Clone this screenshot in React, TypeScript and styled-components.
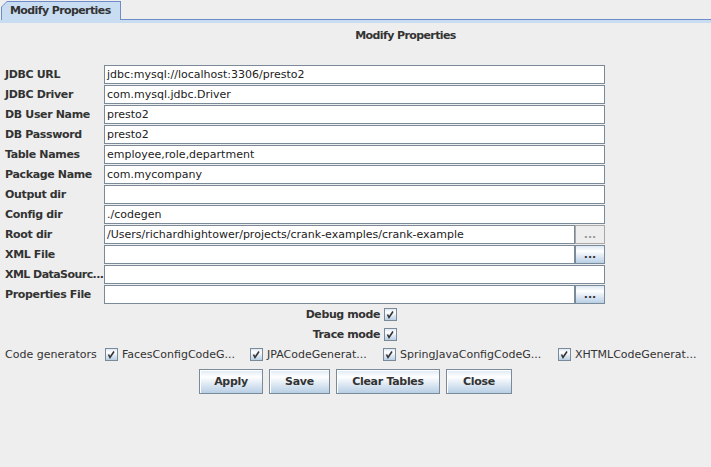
import React from 'react';
import styled, { createGlobalStyle } from 'styled-components';

const GlobalStyle = createGlobalStyle`
  html, body {
    margin: 0;
    padding: 0;
    background: #eeeeee;
  }
  body {
    font-family: "DejaVu Sans", Verdana, sans-serif;
    font-size: 11px;
    color: #333333;
  }
`;

const Window = styled.div`
  width: 711px;
  height: 467px;
  overflow: hidden;
  background: #eeeeee;
`;

const TabStrip = styled.div`
  display: flex;
  flex-direction: column;
`;

const TabRow = styled.div`
  display: flex;
  height: 20px;
  padding-top: 1px;
  box-sizing: border-box;
`;

const TabOuter = styled.div`
  margin-left: 1px;
  width: 120px;
  height: 19px;
  box-sizing: border-box;
  padding: 1px 1px 0 1px;
  background: #6f8cc8;
  clip-path: polygon(6px 0, 100% 0, 100% 100%, 0 100%, 0 6px);
`;

const TabInner = styled.div`
  height: 100%;
  background: #c8ddf2;
  clip-path: polygon(5px 0, 100% 0, 100% 100%, 0 100%, 0 5px);
  padding-left: 8px;
  line-height: 17px;
  font-weight: bold;
  letter-spacing: -0.6px;
  white-space: nowrap;
`;

const TabFiller = styled.div`
  flex: 1;
  border-bottom: 1px solid #6f8cc8;
`;

const ContentEdge = styled.div`
  height: 3px;
  background: #c8ddf2;
`;

const Title = styled.div`
  margin-top: 6px;
  padding-left: 100px;
  text-align: center;
  line-height: 14px;
  font-weight: bold;
  letter-spacing: -0.6px;
`;

const Form = styled.div`
  margin-top: 22px;
  padding-left: 5px;
  display: grid;
  grid-template-columns: 99px 501px;
  grid-auto-rows: 19px;
  row-gap: 1px;
`;

const Label = styled.div<{ $squeeze?: boolean }>`
  align-self: center;
  font-weight: bold;
  letter-spacing: ${(p) => (p.$squeeze ? '-0.55px' : '-0.35px')};
  white-space: nowrap;
  line-height: 14px;
`;

const FieldCell = styled.div`
  display: flex;
`;

const TextField = styled.div`
  flex: 1;
  height: 19px;
  box-sizing: border-box;
  border: 1px solid #7a8a99;
  background: #ffffff;
  padding-left: 2px;
  line-height: 17px;
  color: #222222;
  white-space: nowrap;
  overflow: hidden;
`;

const BrowseButton = styled.div<{ $disabled?: boolean }>`
  width: 30px;
  height: 19px;
  box-sizing: border-box;
  border: 1px solid ${(p) => (p.$disabled ? '#a8a8a8' : '#7a8a99')};
  background: ${(p) =>
    p.$disabled
      ? '#eeeeee'
      : 'linear-gradient(#dde8f3 0%, #ffffff 30%, #dde8f3 62%, #b8cfe5 100%)'};
  color: ${(p) => (p.$disabled ? '#999999' : '#333333')};
  font-weight: bold;
  text-align: center;
  line-height: 18px;
`;

const ToggleRow = styled.div`
  display: grid;
  grid-template-columns: 380px 13px;
  column-gap: 4px;
  height: 20px;
  align-items: center;
`;

const ToggleLabel = styled.div`
  justify-self: end;
  font-weight: bold;
  letter-spacing: -0.4px;
`;

const GeneratorRow = styled.div`
  display: flex;
  align-items: center;
  height: 20px;
  padding-left: 5px;
`;

const GeneratorLabel = styled.div`
  width: 100px;
  white-space: nowrap;
`;

const GeneratorItem = styled.div<{ $width: number }>`
  width: ${(p) => p.$width}px;
  display: flex;
  align-items: center;
  gap: 4px;
  white-space: nowrap;
`;

const Box = styled.span`
  display: inline-block;
  flex: none;
  width: 13px;
  height: 13px;
  box-sizing: border-box;
  border: 1px solid #7a8a99;
  background: linear-gradient(#dde8f3 0%, #ffffff 30%, #dde8f3 62%, #b8cfe5 100%);
  svg {
    display: block;
  }
`;

const ButtonRow = styled.div`
  margin-top: 5px;
  display: flex;
  justify-content: center;
  gap: 6px;
`;

const Button = styled.div<{ $width: number }>`
  width: ${(p) => p.$width}px;
  height: 25px;
  box-sizing: border-box;
  border: 1px solid #7a8a99;
  box-shadow: inset 1px 1px 0 #ffffff;
  background: linear-gradient(#dde8f3 0%, #ffffff 30%, #dde8f3 62%, #b8cfe5 100%);
  font-weight: bold;
  text-align: center;
  line-height: 23px;
  letter-spacing: -0.3px;
`;

function CheckBox() {
  return (
    <Box>
      <svg width="11" height="11" viewBox="0 0 11 11">
        <polyline
          points="2.5,5.5 4,8.5 8,2.5"
          fill="none"
          stroke="#333333"
          strokeWidth="1.6"
        />
      </svg>
    </Box>
  );
}

type Row = { label: string; value: string; browse?: 'on' | 'off'; squeeze?: boolean };

const rows: Row[] = [
  { label: 'JDBC URL', value: 'jdbc:mysql://localhost:3306/presto2' },
  { label: 'JDBC Driver', value: 'com.mysql.jdbc.Driver' },
  { label: 'DB User Name', value: 'presto2' },
  { label: 'DB Password', value: 'presto2' },
  { label: 'Table Names', value: 'employee,role,department' },
  { label: 'Package Name', value: 'com.mycompany' },
  { label: 'Output dir', value: '' },
  { label: 'Config dir', value: './codegen' },
  {
    label: 'Root dir',
    value: '/Users/richardhightower/projects/crank-examples/crank-example',
    browse: 'off',
  },
  { label: 'XML File', value: '', browse: 'on' },
  { label: 'XML DataSourc...', value: '', squeeze: true },
  { label: 'Properties File', value: '', browse: 'on' },
];

const generators = [
  { name: 'FacesConfigCodeG...', width: 145 },
  { name: 'JPACodeGenerat...', width: 133 },
  { name: 'SpringJavaConfigCodeG...', width: 175 },
  { name: 'XHTMLCodeGenerat...', width: 140 },
];

const buttons = [
  { text: 'Apply', width: 64 },
  { text: 'Save', width: 61 },
  { text: 'Clear Tables', width: 104 },
  { text: 'Close', width: 66 },
];

export default function App() {
  return (
    <Window>
      <GlobalStyle />
      <TabStrip>
        <TabRow>
          <TabOuter>
            <TabInner>Modify Properties</TabInner>
          </TabOuter>
          <TabFiller />
        </TabRow>
        <ContentEdge />
      </TabStrip>

      <Title>Modify Properties</Title>

      <Form>
        {rows.map((r) => (
          <React.Fragment key={r.label}>
            <Label $squeeze={r.squeeze}>{r.label}</Label>
            <FieldCell>
              <TextField>{r.value}</TextField>
              {r.browse && (
                <BrowseButton $disabled={r.browse === 'off'}>...</BrowseButton>
              )}
            </FieldCell>
          </React.Fragment>
        ))}
      </Form>

      <ToggleRow>
        <ToggleLabel>Debug mode</ToggleLabel>
        <CheckBox />
      </ToggleRow>
      <ToggleRow>
        <ToggleLabel>Trace mode</ToggleLabel>
        <CheckBox />
      </ToggleRow>

      <GeneratorRow>
        <GeneratorLabel>Code generators</GeneratorLabel>
        {generators.map((g) => (
          <GeneratorItem key={g.name} $width={g.width}>
            <CheckBox />
            {g.name}
          </GeneratorItem>
        ))}
      </GeneratorRow>

      <ButtonRow>
        {buttons.map((b) => (
          <Button key={b.text} $width={b.width}>
            {b.text}
          </Button>
        ))}
      </ButtonRow>
    </Window>
  );
}
